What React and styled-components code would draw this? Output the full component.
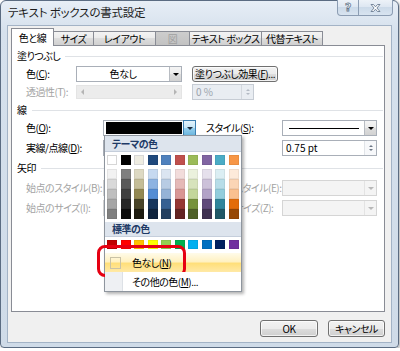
import React from 'react';
import styled, { createGlobalStyle } from 'styled-components';

const GlobalStyle = createGlobalStyle`
  html, body {
    margin: 0;
    padding: 0;
    background: #fff;
  }
  body {
    font-family: "Noto Sans CJK JP", "Noto Sans", sans-serif;
    font-size: 10px;
    letter-spacing: -0.5px;
    font-feature-settings: "palt";
    color: #000;
  }
`;

const THEME = [
  ['#ffffff', '#f2f2f2', '#d9d9d9', '#bfbfbf', '#a6a6a6', '#808080'],
  ['#000000', '#7f7f7f', '#595959', '#3f3f3f', '#262626', '#0c0c0c'],
  ['#eeece1', '#ddd9c3', '#c4bd97', '#938953', '#494429', '#1d1b10'],
  ['#1f497d', '#c6d9f0', '#8db3e2', '#548dd4', '#17365d', '#0f243e'],
  ['#4f81bd', '#dbe5f1', '#b8cce4', '#95b3d7', '#366092', '#244061'],
  ['#c0504d', '#f2dcdb', '#e5b9b7', '#d99694', '#953734', '#632423'],
  ['#9bbb59', '#ebf1dd', '#d7e3bc', '#c3d69b', '#76923c', '#4f6128'],
  ['#8064a2', '#e5e0ec', '#ccc1d9', '#b2a2c7', '#5f497a', '#3f3151'],
  ['#4bacc6', '#dbeef3', '#b7dde8', '#92cddc', '#31859b', '#205867'],
  ['#f79646', '#fdeada', '#fbd5b5', '#fac08f', '#e36c09', '#974806'],
];

const STANDARD = ['#c00000', '#ff0000', '#ffc000', '#ffff00', '#92d050', '#00b050', '#00b0f0', '#0070c0', '#002060', '#7030a0'];

const Window = styled.div`
  position: relative;
  width: 399px;
  height: 348px;
  box-sizing: border-box;
  border: 1px solid #5b6c82;
  border-radius: 6px 6px 4px 4px;
  background: linear-gradient(#e7eef6, #d6e1ed 30px, #cfdbe8);
  box-shadow: 1px 1px 3px rgba(0, 0, 0, 0.35);
  display: flex;
  flex-direction: column;
  padding: 0 6px 4px 6px;
`;

const TitleBar = styled.div`
  height: 24px;
  display: flex;
  align-items: flex-start;
`;

const Title = styled.div`
  font-size: 11.5px;
  letter-spacing: -0.2px;
  line-height: 23px;
  margin-left: 1px;
  color: #1c1c1c;
  white-space: nowrap;
`;

const CaptionGroup = styled.div`
  margin-left: auto;
  margin-top: -1px;
  margin-right: -1px;
  display: flex;
`;

const CaptionButton = styled.div`
  width: ${p => p.w}px;
  height: 16px;
  box-sizing: border-box;
  border: 1px solid #8c9db3;
  border-top: none;
  border-left-width: ${p => (p.first ? 1 : 0)}px;
  border-radius: ${p => (p.first ? '0 0 0 4px' : '0 0 4px 0')};
  background: linear-gradient(#edf2f8, #dce6f1 50%, #ccdae9 50%, #d8e4f0);
  display: flex;
  align-items: center;
  justify-content: center;
`;

const HelpGlyph = styled.span`
  font-family: "DejaVu Sans", sans-serif;
  font-weight: bold;
  font-size: 11px;
  line-height: 1;
  color: #fff;
  -webkit-text-stroke: 0.8px #66788e;
`;

const Client = styled.div`
  flex: 1;
  background: #f0f0f0;
  border: 1px solid #a3b3c6;
  padding: 2px 6px 0 3px;
  display: flex;
  flex-direction: column;
`;

const TabStrip = styled.div`
  display: flex;
  align-items: flex-end;
  height: 18px;
  margin-bottom: -1px;
  position: relative;
  z-index: 1;
`;

const Tab = styled.div`
  width: ${p => p.w}px;
  height: ${p => (p.active ? 18 : 15)}px;
  box-sizing: border-box;
  border: 1px solid #898c95;
  border-bottom: ${p => (p.active ? 'none' : '1px solid #898c95')};
  margin-left: ${p => (p.first ? 0 : -1)}px;
  background: ${p =>
    p.active
      ? '#fff'
      : p.disabled
      ? 'linear-gradient(#cdcdcd, #c2c2c2)'
      : 'linear-gradient(#f3f3f3, #ebebeb 50%, #dddddd 50%, #d0d0d0)'};
  color: ${p => (p.disabled ? '#a0a0a0' : '#000')};
  display: flex;
  align-items: center;
  justify-content: center;
  line-height: 1;
  white-space: nowrap;
  padding-top: ${p => (p.active ? 1 : 0)}px;
`;

const Panel = styled.div`
  height: 267px;
  box-sizing: border-box;
  background: #fff;
  border: 1px solid #898c95;
  padding: 1px 1px 0 5px;
`;

const SectionHeader = styled.div`
  height: 18px;
  display: flex;
  align-items: center;
  gap: 5px;
  line-height: 1;
  &::after {
    content: '';
    flex: 1;
    height: 1px;
    background: #dfe2e6;
  }
`;

const Row = styled.div`
  height: ${p => p.h || 18}px;
  display: grid;
  grid-template-columns: ${p => p.cols};
  align-items: center;
  padding-left: 9px;
  line-height: 1;
`;

const Label = styled.span`
  color: ${p => (p.disabled ? '#a3a3a3' : '#000')};
  white-space: nowrap;
`;

const Combo = styled.div`
  position: relative;
  height: ${p => p.h || 16}px;
  box-sizing: border-box;
  border: 1px solid ${p => (p.disabled ? '#d5d5d5' : '#a9afb8')};
  background: ${p => (p.disabled ? '#f4f4f4' : '#fff')};
  display: flex;
`;

const ComboText = styled.div`
  flex: 1;
  display: flex;
  align-items: center;
  justify-content: ${p => (p.center ? 'center' : 'flex-start')};
  padding-left: ${p => (p.center ? 0 : 3)}px;
  color: ${p => (p.disabled ? '#9a9a9a' : '#000')};
`;

const ColorFill = styled.div`
  flex: 1;
  margin: 1px 1px 1px 2px;
  background: ${p => p.color};
`;

const LineSample = styled.div`
  flex: 1;
  display: flex;
  align-items: center;
  padding: 0 5px 0 6px;
  &::before {
    content: '';
    flex: 1;
    height: 1px;
    background: #000;
  }
`;

const DropButton = styled.div`
  width: 12px;
  box-sizing: border-box;
  display: flex;
  align-items: center;
  justify-content: center;
  border-left: 1px solid ${p => (p.pressed ? '#3c7fb1' : p.disabled ? '#e3e3e3' : '#b8bcc2')};
  ${p => p.pressed && 'border: 1px solid #3c7fb1; margin: -1px -1px -1px 0; width: 13px;'}
  background: ${p =>
    p.pressed
      ? 'linear-gradient(#e5f4fc, #c4e5f6 50%, #98d1ef 50%, #6cb6de)'
      : p.disabled
      ? '#f4f4f4'
      : 'linear-gradient(#f4f4f4, #ebebeb 50%, #dddddd 50%, #d2d2d2)'};
`;

const Tri = styled.span`
  width: 0;
  height: 0;
  border-left: ${p => p.s || 3}px solid transparent;
  border-right: ${p => p.s || 3}px solid transparent;
  ${p => (p.up ? 'border-bottom' : 'border-top')}: ${p => p.s || 3}px solid ${p => p.color || '#000'};
`;

const SideTri = styled.span`
  width: 0;
  height: 0;
  border-top: 3px solid transparent;
  border-bottom: 3px solid transparent;
  ${p => (p.left ? 'border-right' : 'border-left')}: 3px solid #b5b5b5;
`;

const Slider = styled.div`
  height: 14px;
  box-sizing: border-box;
  background: #ececec;
  border: 1px solid #e4e4e4;
  display: flex;
  align-items: center;
  justify-content: space-between;
  padding: 0 4px;
`;

const Spinner = styled.div`
  width: ${p => p.w}px;
  height: 16px;
  box-sizing: border-box;
  border: 1px solid ${p => (p.disabled ? '#c6ccd4' : '#a9afb8')};
  background: ${p => (p.disabled ? '#e9edf2' : '#fff')};
  display: flex;
`;

const SpinText = styled.div`
  flex: 1;
  display: flex;
  align-items: center;
  padding-left: 3px;
  letter-spacing: 0;
  color: ${p => (p.disabled ? '#9ba3ad' : '#000')};
`;

const SpinButtons = styled.div`
  width: 11px;
  display: flex;
  flex-direction: column;
  justify-content: center;
  align-items: center;
  gap: 2px;
  border-left: 1px solid ${p => (p.disabled ? '#d3d8de' : '#e1e4e8')};
  background: ${p => (p.disabled ? '#e9edf2' : '#f7f8fa')};
`;

const PushButton = styled.div`
  width: ${p => p.w}px;
  height: ${p => p.h || 16}px;
  box-sizing: border-box;
  border: 1px solid #707070;
  border-radius: 3px;
  background: linear-gradient(#f2f2f2, #ebebeb 50%, #dddddd 50%, #cfcfcf);
  box-shadow: inset 0 0 0 1px rgba(255, 255, 255, 0.7);
  display: flex;
  align-items: center;
  justify-content: center;
  line-height: 1;
  white-space: nowrap;
`;

const Footer = styled.div`
  display: flex;
  justify-content: flex-end;
  gap: 10px;
  padding-top: 8px;
`;

const Popup = styled.div`
  position: absolute;
  left: 0;
  top: 14px;
  width: 138px;
  height: 157px;
  box-sizing: border-box;
  border: 1px solid #8e959e;
  background: #fff;
  box-shadow: 2px 2px 3px rgba(0, 0, 0, 0.3);
  z-index: 5;
  display: flex;
  flex-direction: column;
`;

const PaletteHeader = styled.div`
  height: ${p => p.h}px;
  margin-top: ${p => p.mt || 0}px;
  box-sizing: border-box;
  background: #dde4ed;
  border-bottom: 1px solid #c5cedb;
  display: flex;
  align-items: center;
  padding-left: 7px;
  font-weight: bold;
  color: #1e3a66;
  line-height: 1;
`;

const SwatchRow = styled.div`
  display: grid;
  grid-template-columns: repeat(10, 10px);
  column-gap: 3.5px;
  padding-left: 2px;
  margin-top: ${p => p.mt}px;
`;

const Swatch = styled.div`
  height: ${p => p.h || 10}px;
  background: ${p => p.color};
  box-shadow: inset 0 0 0 1px ${p => (p.light ? '#d6d6d6' : 'rgba(0, 0, 0, 0.06)')};
`;

const TintColumn = styled.div`
  display: flex;
  flex-direction: column;
`;

const MenuItem = styled.div`
  position: relative;
  height: 19px;
  margin-top: ${p => p.mt || 0}px;
  display: flex;
  align-items: center;
  background: ${p =>
    p.hot
      ? 'linear-gradient(#fffbe9, #fff1c2 45%, #ffdf7a 55%, #ffe9a6)'
      : 'linear-gradient(to right, #eef0f3 17px, #dde1e6 17px, #dde1e6 18px, #fff 18px)'};
  line-height: 1;
`;

const ItemIcon = styled.div`
  width: 17px;
  display: flex;
  justify-content: center;
`;

const EmptyBox = styled.div`
  width: 11px;
  height: 12px;
  box-sizing: border-box;
  border: 1px solid #c9c2a6;
  margin-left: 3px;
`;

const ItemText = styled.span`
  margin-left: 10px;
  color: #000;
  white-space: nowrap;
`;

const Annotation = styled.div`
  position: absolute;
  left: -8px;
  top: -8px;
  width: 89px;
  height: 32px;
  box-sizing: border-box;
  border: 3px solid #e60012;
  border-radius: 8px;
  pointer-events: none;
`;

const CloseIcon = () => (
  <svg width="11" height="10" viewBox="0 0 11 10">
    <path
      d="M1 1.5 L3.5 1.5 L5.5 3.8 L7.5 1.5 L10 1.5 L6.9 5 L10 8.5 L7.5 8.5 L5.5 6.2 L3.5 8.5 L1 8.5 L4.1 5 Z"
      fill="#fff"
      stroke="#6a7c92"
      strokeWidth="0.9"
      strokeLinejoin="round"
    />
  </svg>
);

const ColorPopup = () => (
  <Popup>
    <PaletteHeader h={16}>テーマの色</PaletteHeader>
    <SwatchRow mt={3}>
      {THEME.map((c, i) => (
        <Swatch key={i} color={c[0]} light={i === 0 || i === 2} />
      ))}
    </SwatchRow>
    <SwatchRow mt={4}>
      {THEME.map((c, i) => (
        <TintColumn key={i}>
          {c.slice(1).map(t => (
            <Swatch key={t} color={t} />
          ))}
        </TintColumn>
      ))}
    </SwatchRow>
    <PaletteHeader h={15} mt={3}>標準の色</PaletteHeader>
    <SwatchRow mt={3}>
      {STANDARD.map(c => (
        <Swatch key={c} color={c} h={9} />
      ))}
    </SwatchRow>
    <MenuItem hot mt={4}>
      <ItemIcon>
        <EmptyBox />
      </ItemIcon>
      <ItemText>色なし(<u>N</u>)</ItemText>
      <Annotation />
    </MenuItem>
    <MenuItem>
      <ItemIcon />
      <ItemText>その他の色(<u>M</u>)...</ItemText>
    </MenuItem>
  </Popup>
);

const LINE_COLS = '77px 93px 10px 76px 95px';

export default function App() {
  return (
    <>
      <GlobalStyle />
      <Window>
        <TitleBar>
          <Title>テキスト ボックスの書式設定</Title>
          <CaptionGroup>
            <CaptionButton w={22} first>
              <HelpGlyph>?</HelpGlyph>
            </CaptionButton>
            <CaptionButton w={34}>
              <CloseIcon />
            </CaptionButton>
          </CaptionGroup>
        </TitleBar>
        <Client>
          <TabStrip>
            <Tab w={43} active first>色と線</Tab>
            <Tab w={41}>サイズ</Tab>
            <Tab w={63}>レイアウト</Tab>
            <Tab w={35} disabled>図</Tab>
            <Tab w={73}>テキスト ボックス</Tab>
            <Tab w={62}>代替テキスト</Tab>
          </TabStrip>
          <Panel>
            <SectionHeader>塗りつぶし</SectionHeader>
            <Row cols="50px 106px 10px 86px">
              <Label>色(<u>C</u>):</Label>
              <Combo>
                <ComboText center>色なし</ComboText>
                <DropButton>
                  <Tri />
                </DropButton>
              </Combo>
              <span />
              <PushButton w={86}>塗りつぶし効果(<u>F</u>)...</PushButton>
            </Row>
            <Row cols="50px 106px 10px 62px">
              <Label disabled>透過性(T):</Label>
              <Slider>
                <SideTri left />
                <SideTri />
              </Slider>
              <span />
              <Spinner w={62} disabled>
                <SpinText disabled>0 %</SpinText>
                <SpinButtons disabled>
                  <Tri up s={2} color="#b3bac3" />
                  <Tri s={2} color="#b3bac3" />
                </SpinButtons>
              </Spinner>
            </Row>
            <SectionHeader>線</SectionHeader>
            <Row cols={LINE_COLS}>
              <Label>色(<u>O</u>):</Label>
              <Combo>
                <ColorFill color="#000" />
                <DropButton pressed>
                  <Tri color="#1b2a3c" />
                </DropButton>
                <ColorPopup />
              </Combo>
              <span />
              <Label>スタイル(<u>S</u>):</Label>
              <Combo>
                <LineSample />
                <DropButton>
                  <Tri />
                </DropButton>
              </Combo>
            </Row>
            <Row cols={LINE_COLS} h={22}>
              <Label>実線/点線(<u>D</u>):</Label>
              <Combo>
                <ComboText />
                <DropButton>
                  <Tri />
                </DropButton>
              </Combo>
              <span />
              <Label>太さ(<u>W</u>):</Label>
              <Spinner w={95}>
                <SpinText>0.75 pt</SpinText>
                <SpinButtons>
                  <Tri up s={2} color="#6d7785" />
                  <Tri s={2} color="#6d7785" />
                </SpinButtons>
              </Spinner>
            </Row>
            <SectionHeader>矢印</SectionHeader>
            <Row cols={LINE_COLS} h={22}>
              <Label disabled>始点のスタイル(B):</Label>
              <Combo disabled>
                <ComboText />
                <DropButton disabled>
                  <Tri color="#b8b8b8" />
                </DropButton>
              </Combo>
              <span />
              <Label disabled>終点のスタイル(E):</Label>
              <Combo disabled>
                <ComboText />
                <DropButton disabled>
                  <Tri color="#b8b8b8" />
                </DropButton>
              </Combo>
            </Row>
            <Row cols={LINE_COLS}>
              <Label disabled>始点のサイズ(I):</Label>
              <Combo disabled>
                <ComboText />
                <DropButton disabled>
                  <Tri color="#b8b8b8" />
                </DropButton>
              </Combo>
              <span />
              <Label disabled>終点のサイズ(Z):</Label>
              <Combo disabled>
                <ComboText />
                <DropButton disabled>
                  <Tri color="#b8b8b8" />
                </DropButton>
              </Combo>
            </Row>
          </Panel>
          <Footer>
            <PushButton w={58} h={17}>OK</PushButton>
            <PushButton w={57} h={17}>キャンセル</PushButton>
          </Footer>
        </Client>
      </Window>
    </>
  );
}
